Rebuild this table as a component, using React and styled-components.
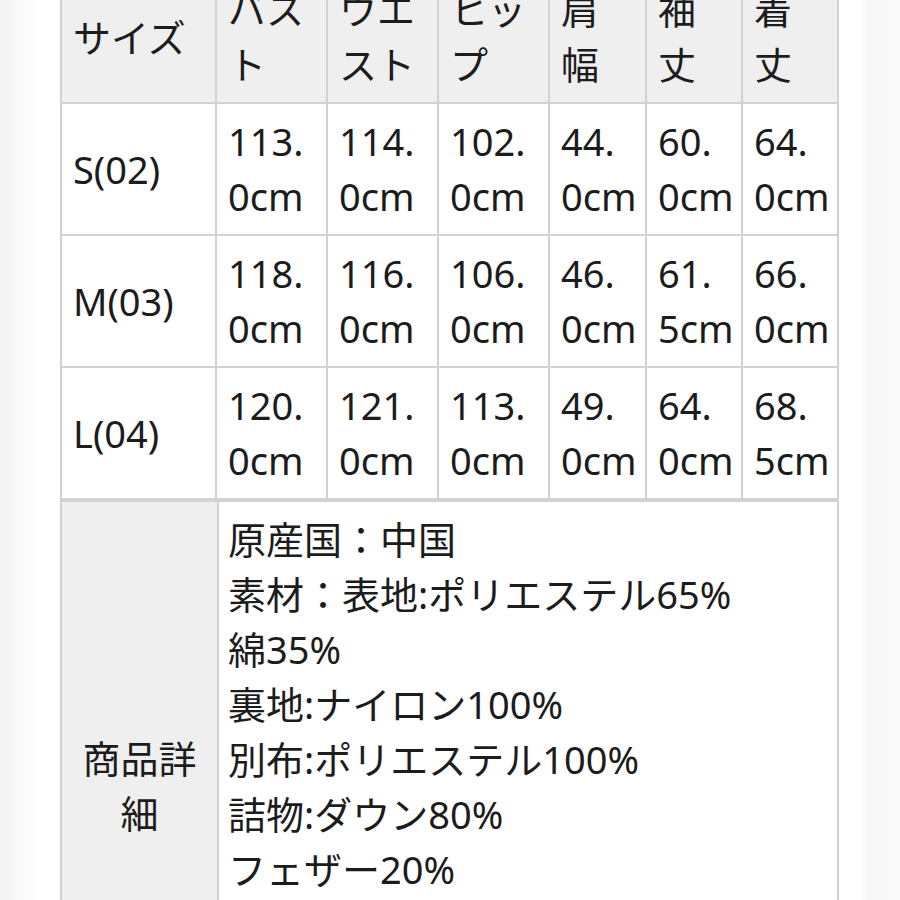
import React from 'react';
import styled, { createGlobalStyle } from 'styled-components';

const GlobalStyle = createGlobalStyle`
  html, body {
    margin: 0;
    padding: 0;
    overflow: hidden;
    background: linear-gradient(to right, #f3f3f3 0px, #fafafa 22px, #ffffff 44px, #ffffff 860px, #f7f7f7 866px, #f9f9f9 900px);
    font-family: "Noto Sans", "Noto Sans CJK JP", sans-serif;
    color: #1c1c1c;
  }
`;

const Page = styled.div`
  height: 960px;
  padding-left: 60px;
  margin-top: -30px;
`;

const SizeTable = styled.table`
  border-collapse: collapse;
  table-layout: fixed;
  width: 779px;
  font-size: 38px;
  line-height: 55px;
`;

const Cell = styled.td`
  border: 2px solid #d2d2d2;
  padding: ${(p) => (p.$head ? '10px 12px 10px 11px' : '10px 3px 10px 11px')};
  vertical-align: middle;
  background: ${(p) => (p.$head ? '#efefef' : '#ffffff')};
  font-weight: 400;
`;

const DetailTable = styled.table`
  border-collapse: collapse;
  table-layout: fixed;
  width: 779px;
  font-size: 38px;
  line-height: 55px;
`;

const DetailLabel = styled.th`
  width: 135px;
  border: 2px solid #d2d2d2;
  background: #efefef;
  font-weight: 400;
  text-align: center;
  vertical-align: middle;
  padding: 10px 10px;
  height: 548px;
`;

const DetailBody = styled.td`
  border: 2px solid #d2d2d2;
  background: #ffffff;
  vertical-align: top;
  padding: 10px 10px 10px 9px;
`;

const Line = styled.div`
  white-space: nowrap;
`;

const cols = [155, 111, 111, 111, 97, 96, 96];
const head = ['サイズ', 'バスト', 'ウエスト', 'ヒップ', '肩幅', '袖丈', '着丈'];
const rows = [
  ['S(02)', '113.0cm', '114.0cm', '102.0cm', '44.0cm', '60.0cm', '64.0cm'],
  ['M(03)', '118.0cm', '116.0cm', '106.0cm', '46.0cm', '61.5cm', '66.0cm'],
  ['L(04)', '120.0cm', '121.0cm', '113.0cm', '49.0cm', '64.0cm', '68.5cm'],
];
const details = [
  '原産国：中国',
  '素材：表地:ポリエステル65%',
  '綿35%',
  '裏地:ナイロン100%',
  '別布:ポリエステル100%',
  '詰物:ダウン80%',
  'フェザー20%',
];

// a measure may break only after its decimal point
const Measure = ({ value }) => {
  const dot = value.indexOf('.');
  if (dot < 0) return value;
  return (
    <>
      {value.slice(0, dot + 1)}
      <wbr />
      {value.slice(dot + 1)}
    </>
  );
};

export default function App() {
  return (
    <>
      <GlobalStyle />
      <Page>
        <SizeTable>
          <colgroup>
            {cols.map((w, i) => (
              <col key={i} style={{ width: w }} />
            ))}
          </colgroup>
          <tbody>
            <tr>
              {head.map((h) => (
                <Cell key={h} $head>{h}</Cell>
              ))}
            </tr>
            {rows.map((r) => (
              <tr key={r[0]}>
                {r.map((v, i) => (
                  <Cell key={i}>
                    <Measure value={v} />
                  </Cell>
                ))}
              </tr>
            ))}
          </tbody>
        </SizeTable>
        <DetailTable>
          <tbody>
            <tr>
              <DetailLabel>商品詳細</DetailLabel>
              <DetailBody>
                {details.map((d) => (
                  <Line key={d}>{d}</Line>
                ))}
              </DetailBody>
            </tr>
          </tbody>
        </DetailTable>
      </Page>
    </>
  );
}
